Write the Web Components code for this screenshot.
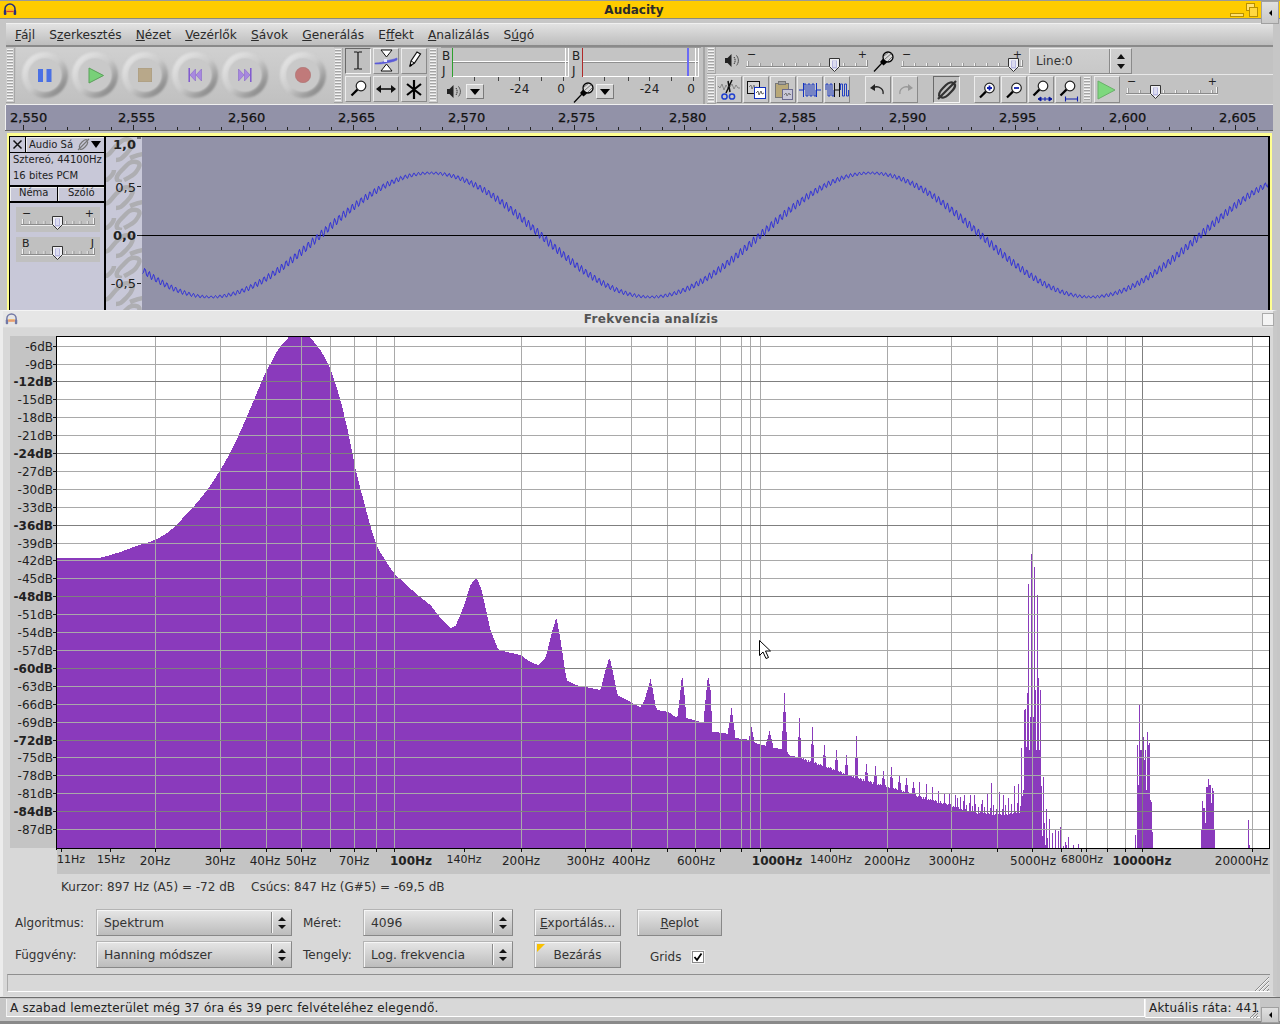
<!DOCTYPE html>
<html><head><meta charset="utf-8"><title>Audacity</title>
<style>
html,body{margin:0;padding:0;background:#c6c6c6;font-family:"DejaVu Sans",sans-serif;font-size:12px;color:#1c1c1c}
body{width:1280px;height:1024px;overflow:hidden;position:relative}
</style></head><body>
<audacity-window>
  <title-bar text="Audacity" slot="title"></title-bar>
  <menu-bar slot="menu">
    <menu-item><u>F</u>ájl</menu-item><menu-item>S<u>z</u>erkesztés</menu-item><menu-item><u>N</u>ézet</menu-item><menu-item><u>V</u>ezérlők</menu-item><menu-item><u>S</u>ávok</menu-item><menu-item><u>G</u>enerálás</menu-item><menu-item>E<u>f</u>fekt</menu-item><menu-item><u>A</u>nalizálás</menu-item><menu-item>S<u>ú</u>gó</menu-item>
  </menu-bar>
  <tool-docks slot="tools"></tool-docks>
  <time-ruler slot="ruler"></time-ruler>
  <audio-track slot="track"></audio-track>
  <status-bar slot="status"></status-bar>
</audacity-window>
<frequency-dialog></frequency-dialog>
<script>
const def=(name,css,html,init)=>customElements.define(name,class extends HTMLElement{
  connectedCallback(){ if(this.shadowRoot)return; const r=this.attachShadow({mode:'open'});
    r.innerHTML='<style>'+css+'</style>'+(typeof html==='function'?html(this):html); if(init)init.call(this,r);} });

const HEAD=(s=14,faded=false)=>`<svg width="${s}" height="${s}" viewBox="0 0 14 14" style="opacity:${faded?.6:1};display:block"><path d="M2 9V6a5 5 0 0 1 10 0v3" fill="none" stroke="#26307a" stroke-width="1.6"/><rect x=".8" y="7" width="2.6" height="5" rx="1" fill="#26307a"/><rect x="10.6" y="7" width="2.6" height="5" rx="1" fill="#26307a"/><rect x="3.4" y="6.5" width="7.2" height="3" fill="#f8a030"/><rect x="3.4" y="8" width="7.2" height="1" fill="#d84020"/></svg>`;

/* ---------- main window ---------- */
def('audacity-window',`:host{display:flex;flex-direction:column;width:1280px;height:1024px;overflow:hidden}
 ::slotted([slot=track]){flex:1;min-height:0}`,
 `<slot name="title"></slot><slot name="menu"></slot><slot name="tools"></slot><slot name="ruler"></slot><slot name="track"></slot><slot name="status"></slot>`);

def('title-bar',`:host{display:block;height:23px;background:#c6c6c6;position:relative}
 .bar{height:17px;background:#ffcc00;border-top:1px solid #9a9a9a;border-bottom:1px solid #8a8a80;display:flex;align-items:center;position:relative}
 .t{position:absolute;left:0;width:1268px;text-align:center;font-weight:700;font-size:12px;color:#2a2a2a;top:2px}
 .ic{margin-left:3px;display:block}
 .btn{margin-left:auto;margin-right:21px;display:flex;align-items:flex-end;height:16px}
 .corner{position:absolute;right:1px;top:1px;width:18px;height:23px;background:linear-gradient(#e0e0e0,#c8c8c8);border:1px solid #a0a0a0;box-sizing:border-box;display:flex;align-items:center;justify-content:center}
 .corner i{width:0;height:0;border:3px solid transparent;border-right-color:#000;margin-left:-3px}`,
 t=>`<div class="bar">${HEAD(14).replace('<svg','<svg class="ic"')}<span class="t">${t.getAttribute('text')}</span>
 <span class="btn"><svg width="30" height="15" viewBox="0 0 30 15"><rect x="1.5" y="10.5" width="13" height="3" fill="#ffe070" stroke="#b89000"/><rect x="17.5" y=".5" width="8" height="7" fill="#ffe070" stroke="#b89000"/><rect x="20.5" y="4.5" width="8" height="9" fill="#ffd840" stroke="#b89000"/></svg></span></div><div class="corner"><i></i></div>`);

def('menu-bar',`:host{display:flex;box-sizing:border-box;height:24px;margin:0 7px 0 6px;padding-left:9px;gap:14.2px;align-items:center;background:linear-gradient(#e2e2e2,#bdbdbd);border-top:1px solid #f0f0f0;border-bottom:2px solid #8a8a8a;font-size:12.2px;color:#2a2a2a}`,`<slot></slot>`);
def('menu-item',`:host{display:block;white-space:nowrap}`,`<slot></slot>`);

def('dock-grip',`:host{display:block;box-sizing:border-box;width:9px;height:100%;padding:1px;background:#cfcfcf;border-right:1px solid #a8a8a8;border-bottom:1px solid #a0a0a0}
 div{height:100%;background:repeating-linear-gradient(#f4f4f4 0 1px,#a4a4a4 1px 2px,#cfcfcf 2px 3px)}`,`<div></div>`);

def('round-button',`:host{display:block;width:46px;height:46px;position:relative}
 .ring{position:absolute;inset:0;border-radius:50%;background:linear-gradient(135deg,#e4e4e4 12%,#cbcbcb 50%,#8c8c8c 84%,#a8a8a8 100%);filter:blur(1.2px)}
 .disc{position:absolute;inset:7px;border-radius:50%;background:#c9c9c9;box-shadow:0 0 2px 1px #c9c9c9}
 .ic{position:absolute;inset:0;display:flex;align-items:center;justify-content:center}`,`<div class="ring"></div><div class="disc"></div><div class="ic"><slot></slot></div>`);

def('transport-bar',`:host{display:flex;align-items:flex-start;box-sizing:border-box;width:318px;height:57px;padding:5px 0 0 6px;gap:4px;background:linear-gradient(#d0d0d0,#c0c0c0)}
 round-button:first-child{margin-right:1px} round-button:last-child{margin-left:8px}`,
 `<round-button><svg width="14" height="13" viewBox="0 0 14 13"><rect x="0" y="0" width="5" height="13" fill="#4a70e4"/><rect x="8.5" y="0" width="5" height="13" fill="#4a70e4"/></svg></round-button>
 <round-button><svg width="17" height="17" viewBox="0 0 17 17" style="margin-left:2px"><path d="M1 1L15.5 8.5 1 16z" fill="#78d078" stroke="#5aa05a"/></svg></round-button>
 <round-button><svg width="14" height="14" viewBox="0 0 14 14"><rect width="14" height="14" fill="#b8a88a" stroke="#a89a80"/></svg></round-button>
 <round-button><svg width="14" height="14" viewBox="0 0 14 14"><path d="M.5 0h1.4v14H.5z" fill="#7a50d0"/><path d="M7.5 1L2 7l5.5 6zM13.5 1L8 7l5.5 6z" fill="#a888e0" stroke="#8868c8" stroke-width=".6"/></svg></round-button>
 <round-button><svg width="14" height="14" viewBox="0 0 14 14"><path d="M12.1 0h1.4v14h-1.4z" fill="#7a50d0"/><path d="M.5 1L6 7l-5.500 6zM6.500 1L12 7l-5.500 6z" fill="#a888e0" stroke="#8868c8" stroke-width=".6"/></svg></round-button>
 <round-button><svg width="16" height="16" viewBox="0 0 16 16"><circle cx="8" cy="8" r="7.700" fill="#c07a7a" stroke="#a86a6a" stroke-width=".5"/></svg></round-button>`);

def('tool-btn',`:host{display:flex;align-items:center;justify-content:center;box-sizing:border-box;width:26px;height:26px;background:#c8c8c8;border:1px solid;border-color:#ececec #8a8a8a #8a8a8a #ececec}
 :host([pressed]){border-color:#6a6a6a #f4f4f4 #f4f4f4 #6a6a6a;background:#c0c0c0}`,`<slot></slot>`);

const MAG=(extra='',cx=14,cy=10)=>`<circle cx="${cx}" cy="${cy}" r="4.800" fill="#fff" stroke="#222" stroke-width="1.200"/><path d="M${cx-3.6} ${cy+3.6}L${cx-9.500} ${cy+9.500}" stroke="#000" stroke-width="2.200"/>${extra}`;
const ICON=(body,s=24)=>`<svg width="${s}" height="${s}" viewBox="0 0 24 24" style="display:block">${body}</svg>`;

def('tools-grid',`:host{display:grid;grid-template-columns:repeat(3,26px);grid-template-rows:26px 26px;gap:2px;margin:1px 2px 0}`,
 `<tool-btn pressed>${ICON('<path d="M8 3h3.500M12.500 3H16M12 3v17M8 20h3.500M12.500 20H16" stroke="#111" stroke-width="1.200" fill="none"/>')}</tool-btn>
 <tool-btn>${ICON('<path d="M7 1h11l-5.500 7zM7 22h11l-5.500-7z" fill="#fff" stroke="#111"/><path d="M1 14c5 0 8-1 11-2s8-1.500 11-3v2c-4 2-7 2-11 3s-7 1-11 1z" fill="#5a5ad8" stroke="#5a5ad8" stroke-width=".6"/><rect x="10" y="10" width="3" height="3" fill="#e8e8ff"/>')}</tool-btn>
 <tool-btn>${ICON('<path d="M8 17l1-5 6-9 3.500 2-6 9-4.500 3z" fill="#fff" stroke="#111" stroke-width="1.200"/><path d="M9 12l3.500 2" stroke="#111"/><path d="M8 17l1.500-1.500" stroke="#000" stroke-width="2"/>')}</tool-btn>
 <tool-btn>${ICON(MAG('',15,9))}</tool-btn>
 <tool-btn>${ICON('<path d="M3 12h18" stroke="#111" stroke-width="1.600"/><path d="M2 12l5-4v8zM22 12l-5-4v8z" fill="#111"/>')}</tool-btn>
 <tool-btn>${ICON('<path d="M12 3v19M5 7l14 11M19 7L5 18" stroke="#000" stroke-width="2.200"/>')}</tool-btn>`);

def('drop-btn',`:host{display:flex;align-items:center;justify-content:center;box-sizing:border-box;width:18px;height:15px;background:#d0d0d0;border:1px solid;border-color:#f0f0f0 #7a7a7a #7a7a7a #f0f0f0}
 i{width:0;height:0;border:5.500px solid transparent;border-top:6px solid #000;border-bottom:0}`,`<i></i>`);

def('level-meter',`:host{display:flex;flex-direction:column;width:130px;height:57px;position:relative}
 svg{display:block;flex:none}
 .row{display:flex;align-items:center;height:21px;font-size:12px;color:#222}
 .ic{width:25px;height:21px;display:flex;align-items:center;justify-content:center}
 .a,.b{align-self:flex-start;line-height:17px}
 .a{width:71px;text-align:center}.b{width:12px;text-align:center}`,
 t=>{const c=t.getAttribute('color'),mark=t.getAttribute('mark');
 return `<svg width="130" height="34" viewBox="0 0 130 34" font-family="DejaVu Sans" font-size="12" fill="#222">
 <rect x="0" y="0" width="130" height="1" fill="#9a9a9a"/>
 <text x="1" y="13">B</text><text x="1" y="28">J</text>
 <rect x="11" y="1" width="117" height="29" fill="#c4c4c4"/>
 <rect x="11" y="14" width="117" height="1" fill="#fff"/><rect x="11" y="15" width="117" height="1" fill="#8f8f8f"/><rect x="11" y="29" width="117" height="1" fill="#fff"/>
 <rect x="11" y="1" width="1" height="29" fill="${c}"/>
 <rect x="124" y="1" width="1" height="29" fill="#fff"/><rect x="127" y="1" width="1" height="29" fill="#fff"/>
 ${mark?`<rect x="${mark}" y="1" width="2" height="28" fill="#6a6af4"/>`:''}
 ${[33,57,78,100,122].map(x=>`<rect x="${x}" y="30" width="1" height="4" fill="#444"/>`).join('')}</svg>
 <div class="row"><span class="ic"><slot></slot></span><drop-btn></drop-btn><span class="a">-24</span><span class="b">0</span></div>`});

const SPK=`<svg width="16" height="15" viewBox="0 0 16 15" style="display:block"><path d="M1 5h2.500L7.500 1v13l-4-4H1z" fill="#222"/><path d="M10 4c1.500 2 1.500 5 0 7M12.500 2.500c2.500 3 2.500 7 0 10" fill="none" stroke="#333" stroke-dasharray="1.500 .6"/></svg>`;
const MIC=`<svg width="22" height="22" viewBox="0 0 22 22" style="display:block"><path d="M1 21.500L9 13" stroke="#000" stroke-width="1.200"/><path d="M7 12l3.500 3.500 3.500-3-4-4z" fill="#000"/><ellipse cx="15" cy="7" rx="5" ry="5" fill="#d8d8d8" stroke="#000" stroke-width="1.300"/><path d="M11 6l5-4M12 9l7-6M14.500 11.500l5-5" stroke="#333" stroke-width=".6"/></svg>`;

def('mini-slider',`:host{display:block}svg{display:block}`,t=>{
 const w=+t.getAttribute('w'),pos=+t.getAttribute('pos'),step=+t.getAttribute('step'),l=t.getAttribute('l'),r=t.getAttribute('r'),
 bg=t.getAttribute('bg')||'none',h=+(t.getAttribute('h')||26),ly=+(t.getAttribute('ly')||18),x0=+(t.getAttribute('x0')||0),ty=+(t.getAttribute('ty')||ly-8);
 const xe=w-x0;
 let ticks='';for(let x=x0+1,i=0;x<xe-3;x+=step,i++){const end=i==0;ticks+=`<rect x="${x}" y="${ly-(end?5:3)}" width="1" height="${end?5:3}" fill="#f4f4f4"/><rect x="${x+1}" y="${ly-(end?5:3)}" width="1" height="${end?5:3}" fill="#9a9a9a"/>`;}
 ticks+=`<rect x="${xe-2}" y="${ly-6}" width="1" height="6" fill="#f4f4f4"/><rect x="${xe-1}" y="${ly-6}" width="1" height="6" fill="#8a8a8a"/>`;
 return `<svg width="${w}" height="${h}" viewBox="0 0 ${w} ${h}" font-family="DejaVu Sans" font-size="11" fill="#222">
 <rect width="${w}" height="${h}" fill="${bg}"/>
 <text x="${x0+1}" y="${ty}">${l}</text><text x="${xe-1}" y="${ty}" text-anchor="end">${r}</text>
 ${ticks}<rect x="${x0}" y="${ly}" width="${xe-x0}" height="1" fill="#8a8a8a"/><rect x="${x0}" y="${ly+1}" width="${xe-x0}" height="1" fill="#ececec"/>
 <path d="M${pos-4.500} ${ly-7.500}h10v8l-5 5-5-5z" fill="#f0f0f4" stroke="#333"/>
 <rect x="${pos-2}" y="${ly-5.500}" width="5" height="8" fill="#b8b8e0"/><path d="M${pos-1} ${ly-4}h3M${pos-1} ${ly-2}h3M${pos-1} ${ly}h3" stroke="#fff"/></svg>`});

def('line-combo',`:host{display:flex;box-sizing:border-box;width:103px;height:26px;align-items:center;background:linear-gradient(#cfcfcf,#c8c8c8);border:1px solid;border-color:#ececec #8a8a8a #8a8a8a #ececec;font-size:12px;color:#333}
 span{flex:1;padding-left:6px} b{display:block;width:20px;height:24px;border-left:1px solid #ececec;box-shadow:-1px 0 #8a8a8a;display:flex;flex-direction:column;align-items:center;justify-content:center;gap:5px}
 i{width:0;height:0;border:4px solid transparent} i.u{border-bottom:5px solid #111;border-top:0} i.d{border-top:5px solid #111;border-bottom:0}`,
 `<span>Line:0</span><b><i class="u"></i><i class="d"></i></b>`);

def('mixer-row',`:host{display:flex;height:28px;box-sizing:border-box;align-items:center;border-bottom:1px solid #e8e8e8}
 .sp{margin-left:8px;width:22px}.mc{margin:0 6px 0 5px;width:22px}
 mini-slider{align-self:flex-start;margin-top:1px}
 line-combo{margin:1px 0 0 6px}`,
 `<dock-grip></dock-grip><span class="sp">${SPK}</span><mini-slider w="122" pos="88" step="12" l="−" r="+"></mini-slider><span class="mc">${MIC}</span><mini-slider w="122" pos="112" step="12" l="−" r="+"></mini-slider><line-combo></line-combo>`);

const SQW=(x,n,s=2)=>{let d=`M${x} 12`;let cx=x;for(let i=0;i<n;i++){d+=`V${i%2?18:6}`;cx+=s;d+=`H${cx}`}return d+'V12'};
def('edit-row',`:host{display:flex;height:29px;align-items:flex-start;padding-top:1px;box-sizing:border-box}
 tool-btn{margin-right:1px;height:27px}
 .g1{margin-left:14px}.g2{margin-left:14px}.g3{margin-left:13px}
 mini-slider{margin-left:5px;margin-top:-1px}
 .gr{margin:0 2px 0 1px;width:9px;height:27px}`,
 `<dock-grip></dock-grip>
 <tool-btn>${ICON('<path d="M1 8l2 2 2-4 2 6 2-5 2 3M13 9l2-3 2 5 2-4 2 3h2" fill="none" stroke="#777" stroke-width=".8"/><path d="M15 2L9 15M11 3l2 11" stroke="#111" stroke-width="1.500"/><circle cx="7.500" cy="18.500" r="2.600" fill="none" stroke="#2040d0" stroke-width="1.500"/><circle cx="15" cy="18.500" r="2.600" fill="none" stroke="#2040d0" stroke-width="1.500"/>')}</tool-btn>
 <tool-btn>${ICON('<rect x="3.500" y="3.500" width="12" height="12" fill="#d4d4d4" stroke="#111"/><path d="M5 9l2-2 1 4 2-4 1 3 2-1" fill="none" stroke="#666" stroke-width=".8"/><rect x="10.500" y="9.500" width="11" height="11" fill="#fff" stroke="#1030c0"/><path d="M12 15l2-2 1 4 2-4 1 3 2-1" fill="none" stroke="#444" stroke-width=".8"/>')}</tool-btn>
 <tool-btn>${ICON('<rect x="4.500" y="5.500" width="13" height="14" fill="#b8a878" stroke="#777"/><rect x="7.500" y="3.500" width="7" height="3" fill="#a0a0a0" stroke="#777"/><rect x="11.500" y="11.500" width="10" height="10" fill="#c8c8d8" stroke="#6a6a90"/><path d="M13 17l2-2 1 3 2-3 1 2 1-1" fill="none" stroke="#666" stroke-width=".8"/>')}</tool-btn>
 <tool-btn>${ICON('<path d="M1 12h5M18 12h5" stroke="#1030c0"/><path d="'+SQW(6,6)+'" fill="none" stroke="#1030c0" stroke-width=".9"/><path d="M5.500 5v14M18.500 5v14" stroke="#1030c0"/>')}</tool-btn>
 <tool-btn>${ICON('<path d="'+SQW(1,4)+'" fill="none" stroke="#1030c0" stroke-width=".9"/><path d="'+SQW(15.500,4)+'" fill="none" stroke="#1030c0" stroke-width=".9"/><path d="M9.500 5v14M14.500 5v14M9 12h6" stroke="#111"/>')}</tool-btn>
 <tool-btn class="g1">${ICON('<path d="M17 16c1-5-4-8-8-7L6 10" fill="none" stroke="#222" stroke-width="1.300"/><path d="M4 10l5-4v7z" fill="#222"/>')}</tool-btn>
 <tool-btn>${ICON('<path d="M7 16c-1-5 4-8 8-7l3 1" fill="none" stroke="#999" stroke-width="1.300"/><path d="M20 10l-5-4v7z" fill="#999"/>')}</tool-btn>
 <tool-btn class="g2" pressed style="width:27px">${ICON('<path d="M5 19c-3-3 1-7 3-9l3-3c3-3 6-3 7-2M19 5c3 3-1 7-3 9l-3 3c-3 3-6 3-7 2M3 21L21 3" fill="none" stroke="#333" stroke-width="2.200"/>')}</tool-btn>
 <tool-btn class="g3">${ICON(MAG('<path d="M12 10h5M14.500 7.500v5" stroke="#1020b0" stroke-width="1.800"/>',14.500,10))}</tool-btn>
 <tool-btn>${ICON(MAG('<path d="M12 10h5" stroke="#1020b0" stroke-width="1.800"/>',14.500,10))}</tool-btn>
 <tool-btn>${ICON(MAG('<path d="M9 21h14M9 21l3-2v4zM23 21l-3-2v4zM16 19v4" stroke="#1020b0"/>',14,8))}</tool-btn>
 <tool-btn>${ICON(MAG('<path d="M9 21h13M9.500 18.500v5M21.500 18.500v5" stroke="#1020b0" stroke-width="1.100"/>',14,8))}</tool-btn>
 <dock-grip class="gr"></dock-grip>
 <tool-btn>${ICON('<path d="M3 3l17 9-17 9z" fill="#7ed87e" stroke="#6ab06a"/>')}</tool-btn>
 <mini-slider w="92" pos="29" step="12" l="−" r="+" h="28"></mini-slider>`);

def('tool-docks',`:host{display:flex;height:57px;margin:0 7px 0 6px;background:#c2c2c2;border-bottom:1px solid #f0f0f0;font-size:12px}
 .g{height:55px;margin-top:1px}
 transport-bar{margin-left:1px}
 .meters{display:flex;width:267px;padding-left:3px;box-sizing:border-box;border-right:2px solid #a4a4a4}
 .right{display:flex;flex-direction:column;width:566px;margin-left:2px}`,
 `<dock-grip class="g"></dock-grip><transport-bar></transport-bar><dock-grip class="g"></dock-grip><tools-grid></tools-grid><dock-grip class="g"></dock-grip>
 <div class="meters"><level-meter color="#2ea02e">${SPK}</level-meter><level-meter color="#b02a2a" mark="116">${MIC}</level-meter></div>
 <div class="right"><mixer-row></mixer-row><edit-row></edit-row></div>`);

def('time-ruler',`:host{display:block;height:25px;margin:0 7px 0 5px;background:#9292a8;border-left:1px solid #f0f0f0}svg{display:block}`,()=>{
 let s='';const labs=['2,550','2,555','2,560','2,565','2,570','2,575','2,580','2,585','2,590','2,595','2,600','2,605'];
 labs.forEach((l,i)=>{const ax=i==0?10:Math.round(118+110.1*(i-1));s+=`<text x="${ax-6}" y="17">${l}</text>`});
 for(let j=-5;j<55;j++){const ax=Math.round(133+22.04*j);const mj=((j%5)+5)%5==0;s+=`<rect x="${ax-6}" y="${mj?20:22}" width="1" height="${mj?5:3}" fill="#222" stroke="none"/>`}
 return `<svg width="1268" height="25" font-family="DejaVu Sans" font-size="13" fill="#111" stroke="#111" stroke-width=".25">${s}</svg>`});

/* ---------- track ---------- */
def('audio-track',`:host{display:flex;box-sizing:border-box;margin:0 7px 0 5px;padding:2px 1px 0 2px;background:#c6c6c6;position:relative;border-top:1px solid #666;min-width:0}
 .sel{display:flex;flex:1;min-width:0;border-top:3px solid #ffff90;border-left:2px solid #ffff90;border-right:2px solid #ffff90;padding:1px 2px 0 0;background:#000}
 .panel{box-sizing:border-box;width:96px;margin-left:1px;background:#c8c8d8;display:flex;flex-direction:column;font-size:10px;color:#222;border-right:2px solid #000;flex:none}
 .r1{display:flex;height:15px;border-bottom:1px solid #000;gap:1px;background:#000}
 .x{width:15px;background:#c8c8d8;display:flex;align-items:center;justify-content:center}
 .nm{flex:1;display:flex;align-items:center;background:#c8c8d8;padding:0 0 1px 2px;border-top:1px solid #eee;border-left:1px solid #eee;white-space:nowrap}
 .nm svg{margin-left:4px}
 .nm i{width:0;height:0;border:5.500px solid transparent;border-top:7px solid #000;border-bottom:0;margin-left:1px}
 .info{height:33px;margin-top:-1px;padding:0 0 0 3px;line-height:15.500px;border-bottom:2px solid #000;white-space:nowrap}
 .r3{display:flex;height:14px;border-bottom:2px solid #000;gap:1px;background:#000}
 .r3 span{flex:1;background:#c8c8d8;text-align:center;line-height:10px;border-top:1px solid #eee;border-left:1px solid #eee}
 .sl{display:flex;flex-direction:column;gap:5px;padding:4px 0 0 6px}
 .vr{width:36px;flex:none;position:relative;background:#c8c8d8}
 .vr svg{display:block;position:absolute;inset:0}
 .wave{flex:1;min-width:0;background:#9292a8;position:relative;overflow:hidden}
 .wave svg{display:block}`,()=>{
  let d='';for(let x=142;x<=1270;x+=1){const ph=2*Math.PI*(x-210)/440;const a=Math.abs(Math.sin(ph));const r=(1.1+3.2*a)*Math.sin(2*Math.PI*x/4.41);
   d+=(d?'L':'M')+(x-142+.5).toFixed(2)+' '+(235+62*Math.cos(ph)+r-137).toFixed(2)}
  return `<div class="sel"><div class="panel"><div class="r1"><span class="x"><svg width="11" height="11" viewBox="0 0 11 11"><path d="M1.500 1.500l8 8M9.500 1.500l-8 8" stroke="#111" stroke-width="1.500"/></svg></span>
   <span class="nm">Audio Sá<svg width="13" height="13" viewBox="0 0 13 13"><path d="M3 10c-2-2 0-4 2-6s4-3 5-2M10 3c2 2 0 4-2 6s-4 3-5 2M1 12L12 1" fill="none" stroke="#777" stroke-width="1.200"/></svg><i></i></span></div>
   <div class="info">Sztereó, 44100Hz<br>16 bites PCM</div>
   <div class="r3"><span>Néma</span><span>Szóló</span></div>
   <div class="sl"><mini-slider w="84" pos="41" step="7.200" x0="5" l="−" r="+" h="25" ly="17" ty="10" bg="#c0c0c0"></mini-slider><mini-slider w="84" pos="41" step="7.200" x0="5" l="B" r="J" h="25" ly="17" ty="10" bg="#c0c0c0"></mini-slider></div>
  </div>
  <div class="vr"><svg width="36" height="180" viewBox="0 0 36 180" font-family="DejaVu Sans" font-size="13" fill="#222">
   <defs><pattern id="ch" width="36" height="48" patternUnits="userSpaceOnUse" y="-3"><path d="M-4 22C4 22 4 18 10 12s9-8 14-6 2 8-3 13-6 7-11 7M16 48c-8-1-6-6 0-12s8-9 14-8 3 6 0 10-8 6-12 8M24 24c5-2 9-4 14-4M-2 48C4 44 8 40 8 36" fill="none" stroke="#aeaeb2" stroke-width="4.500"/></pattern></defs>
   <rect width="36" height="180" fill="url(#ch)"/>
   <text x="30" y="12" text-anchor="end" font-weight="700" font-size="13">1,0</text>
   <text x="30" y="54.500" text-anchor="end">0,5</text><text x="30" y="103" text-anchor="end" font-weight="700">0,0</text><text x="30" y="151" text-anchor="end">-0,5</text>
   <path d="M31 49.500h4M31 98.500h5M31 146.500h4M31 1h4" stroke="#222"/></svg></div>
  <div class="wave"><svg width="1130" height="180" viewBox="0 0 1130 180"><path d="M0 98.500H1130" stroke="#000"/><path d="${d}" fill="none" stroke="#2f2fd8" stroke-width="1"/></svg></div></div>`});

def('status-bar',`:host{display:flex;box-sizing:border-box;height:27px;padding:1px 20px 4px 6px;border-top:1px solid #6e6e6e;background:#c6c6c6;font-size:12px;color:#222;position:relative;border-bottom:3px solid #8a8a8a}
 div{display:flex;flex:1;background:#d8d8d8;border-left:1px solid #f0f0f0;border-bottom:1px solid #fff;align-items:center;white-space:nowrap;height:18px}
 .a{flex:none;width:1139px;padding-left:3px;box-sizing:border-box;letter-spacing:.21px;border-right:1px solid #fff}
 .b{padding-left:3px;overflow:hidden;letter-spacing:.2px}
 .g{position:absolute;right:22px;bottom:3px;display:block}
 .corner{position:absolute;right:1px;bottom:-2px;width:18px;height:16px;background:linear-gradient(#e0e0e0,#c8c8c8);border:1px solid #a0a0a0;box-sizing:border-box;display:flex;align-items:center;justify-content:center}
 .corner i{width:0;height:0;border:3px solid transparent;border-right-color:#000;margin-left:-3px}`,
 `<div class="a">A szabad lemezterület még 37 óra és 39 perc felvételéhez elegendő.</div><div class="b">Aktuális ráta: 441</div>
 <svg class="g" width="9" height="9" viewBox="0 0 9 9"><path d="M1 9l8-8M4 9l5-5M7 9l2-2" stroke="#8a8a8a"/></svg><span class="corner"><i></i></span>`);

/* ---------- dialog ---------- */
def('combo-box',`:host{display:flex;box-sizing:border-box;height:27px;align-items:center;background:linear-gradient(#e6e6e6,#bcbcbc);border:1px solid;border-color:#b4b4b4 #888 #888 #b4b4b4;box-shadow:inset 1px 1px #f6f6f6;font-size:12.300px;color:#333}
 span{flex:1;padding-left:7px;white-space:nowrap}
 b{display:flex;flex-direction:column;align-items:center;justify-content:center;gap:4px;width:18px;height:21px;border-left:1px solid #f8f8f8;box-shadow:-1px 0 #8a8a8a}
 i{width:0;height:0;border:4px solid transparent} i.u{border-bottom:4px solid #111;border-top:0} i.d{border-top:4px solid #111;border-bottom:0}`,
 `<span><slot></slot></span><b><i class="u"></i><i class="d"></i></b>`);

def('push-button',`:host{display:flex;box-sizing:border-box;height:27px;align-items:center;justify-content:center;background:linear-gradient(#e6e6e6,#bcbcbc);border:1px solid;border-color:#b4b4b4 #888 #888 #b4b4b4;box-shadow:inset 1px 1px #f6f6f6;font-size:12px;color:#333;position:relative;white-space:nowrap}
 :host([corner])::before{content:"";position:absolute;left:2px;top:2px;width:0;height:0;border-top:8px solid #f8c000;border-right:8px solid transparent}`,`<slot></slot>`);

def('spectrum-plot',`:host{display:block;height:538px;margin-left:10px}svg{display:block}`,()=>{
 const X=f=>Math.round(411+(Math.log10(f)-2)*365.6);
 const px=[346,364,381,399,417,435,453,471,489,507,525,543,560,578,596,614,632,650,668,686,704,722,740,757,775,793,811,829];
 const OX=10,OY=336;
 const env=[[57,558],[100,558],[120,552],[133,547],[155,540],[170,531],[193,507],[207,490],[220,470],[233,447],[248,413],[263,377],[277,350],[290,335],[308,335],[320,350],[330,368],[340,400],[348,433],[355,470],[363,500],[370,527],[377,548],[393,573],[417,595],[430,605],[440,618],[450,628],[455,626],[463,607],[470,585],[476,577],[481,590],[490,630],[498,650],[520,655],[530,662],[538,665],[545,658],[552,630],[556,617],[560,640],[566,680],[575,685],[590,688],[600,690],[605,670],[609,657],[612,670],[617,695],[630,702],[640,707],[644,700],[647,690],[650,679],[652,688],[655,706],[657,710],[668,712],[675,717],[677,716],[679,700],[681,680],[682,678],[684,695],[686,718],[700,722],[703,722],[705,700],[707,680],[708,678],[710,690],[712,732],[725,733],[735,738],[750,740],[755,743],[770,747],[785,750],[790,756],[800,757],[805,760],[815,763],[830,768],[845,774],[860,779],[880,785],[900,790],[920,797],[950,805],[970,812],[1000,815],[1020,812]];
 const spikes=[[731,708,3],[751,727,2],[769,731,3],[784,693,2],[799,718,1],[812,727,1],[824,745,1],[836,750,1],[846,755,1],[856,736,1],[866,764,1],[875,766,1],[883,771,1],[891,767,1],[899,775,1],[906,778,1],[913,782,1],[919,782,0],[926,784,0],[932,787,0],[938,791,0],[944,793,0],[949,793,0],[955,795,0],[960,797,0],[964,795,0],[970,795,0],[974,795,0],[982,800,0],[987,794,0],[991,783,0],[999,792,0],[1003,795,0],[1008,798,0],[1014,786,0],[1018,784,0]];
 const bars={1021:748,1022:796,1023:790,1024:710,1025:709,1026:747,1027:693,1028:584,1029:750,1030:717,1031:554,1032:717,1033:717,1034:567,1035:690,1036:750,1037:595,1038:678,1039:750,1040:690,1041:786,1042:836,1043:777,1044:823,1045:845,1046:809,1047:838,1049:819,1052:833,1055:830,1058:831,1060:827,1061:845,1063:846,1065:842,1066:845,1068:837,1073:845,1078:844,
  1135:835,1137:745,1138:785,1139:705,1140:750,1141:750,1142:800,1143:737,1144:760,1145:750,1146:790,1147:732,1148:745,1149:743,1150:800,1151:802,1152:832,
  1201:830,1202:801,1203:808,1204:808,1205:823,1206:787,1207:787,1208:779,1209:785,1210:785,1211:803,1212:788,1213:791,1214:830,1248:820,1249:845,1252:830};
 const base=x=>{for(let i=1;i<env.length;i++){if(x<=env[i][0]){const [a,b]=env[i-1],[c,e]=env[i];return b+(e-b)*(x-a)/(c-a)}}return 812};
 const smooth=x=>{const W=x<260?9:x<430?4:x<625?1:0;if(!W)return base(x);let s=0,n=0;for(let k=-W;k<=W;k++){const v=Math.max(57,x+k);const w=W+1-Math.abs(k);s+=base(v)*w;n+=w}return s/n};
 let d='';
 for(let x=57;x<=1268;x++){let y;
  if(x<=1020){y=smooth(x);
   if(x>800) y+=((x*37)%5)*.5-1;
   if(x>=957&&x%3==0) y=Math.min(y,smooth(x)-6-((x*7)%6));
   for(const [sx,sy,hw] of spikes){const dx=Math.abs(x-sx);if(dx<=hw){y=Math.min(y,sy+(base(x)-sy)*dx/(hw+1))}}
  } else { y=bars[x]; if(y==null) continue; }
  y=Math.round(Math.max(y,337));
  d+=`M${x-OX+.5} ${y-OY}V${848-OY}`;
 }
 let grid='';
 const vf=[];for(const m of [10,100,1000])for(let k=2;k<=9;k++)vf.push(k*m);vf.push(10000,20000);
 for(const f of vf){const mj=f==100||f==1000||f==10000;
   grid+=`<rect x="${X(f)-OX}" y="1" width="1" height="511" fill="${mj?'#7f7f7f':'#a9a9a9'}"/>`;}
 grid+=`<rect x="${750-OX}" y="1" width="1" height="511" fill="#a9a9a9"/>`;
 const ml=[];px.forEach((y,i)=>{const db=6+3*i,mj=db%12==0;
   grid+=`<rect x="47" y="${y-OY}" width="1213" height="1" fill="${mj?'#7f7f7f':'#a9a9a9'}"/>`;
   ml.push(`<rect x="43" y="${y-OY}" width="4" height="1" fill="#111"/><text x="43" y="${y-OY+5}" text-anchor="end" ${mj?'font-weight="700"':''}>-${db}dB</text>`)});
 const ticks=[11,15,...vf,140,1400,6800].map(f=>`<rect x="${X(f)-OX}" y="513" width="1" height="3" fill="#111"/>`).join('');
 const lab=[['11Hz',71,1],['15Hz',111,1],['20Hz',155],['30Hz',220],['40Hz',265],['50Hz',301],['70Hz',354],['100Hz',411,2],['140Hz',464,1],['200Hz',521],['300Hz',585.500],['400Hz',631],['600Hz',696],['1000Hz',777,2],['1400Hz',831,1],['2000Hz',887],['3000Hz',951.500],['5000Hz',1033],['6800Hz',1082,1],['10000Hz',1142,2],['20000Hz',1241.500]]
  .map(([t,x,k])=>`<text x="${x-OX}" y="${k==1?527:529}" text-anchor="middle" font-size="${k==1?11:12}" ${k==2?'font-weight="700"':''}>${t}</text>`).join('');
 return `<svg width="1260" height="538" viewBox="0 0 1260 538" font-family="DejaVu Sans" font-size="12" fill="#222">
  <rect x="0" y="0" width="47" height="512" fill="#c4c4c4"/><rect x="47" y="513" width="1213" height="25" fill="#c4c4c4"/>
  <rect x="47" y="1" width="1213" height="511" fill="#fff"/>
  <path d="${d}" stroke="#8a3abc" stroke-width="1" fill="none" shape-rendering="crispEdges"/>
  ${grid}
  <rect x="46" y="0" width="1214" height="1" fill="#000"/><rect x="46" y="0" width="1" height="514" fill="#000"/><rect x="1259" y="0" width="1" height="513" fill="#000"/><rect x="46" y="512" width="1214" height="1" fill="#000"/>
  ${ml.join('')}${ticks}${lab}</svg>`});

def('frequency-dialog',`:host{position:absolute;left:0;top:310px;width:1277px;height:687px;box-sizing:border-box;background:#d8d8d8;border-left:3px solid #ececec;border-right:4px solid #c8c8c8;border-top:1px solid #f4f4f4;border-bottom:1px solid #e0e0e0;display:flex;flex-direction:column;font-size:12px;color:#333}
 .tb{display:flex;align-items:center;height:16px;background:#e6e6e6;flex:none;position:relative;border-bottom:1px solid #dcdcdc}
 .tb .ic{margin-left:2px}
 .tb .t{position:absolute;left:26px;right:0;text-align:center;font-weight:700;font-size:12px;color:#555;top:1px;letter-spacing:.3px}
 .tb .sq{margin-left:auto;margin-right:-1px;width:10px;height:11px;background:#f4f4f4;border:1px solid #aaa}
 .pwrap{margin:8px 0 0 -3px}
 .read{display:flex;height:17px;margin:4px 0 0 58px;gap:16px;align-items:center;white-space:nowrap;font-size:12px}
 .ctl{display:grid;grid-template-columns:81px 196px 11px 60px 150px 21px 87px 16px 85px;grid-template-rows:27px 27px;row-gap:5px;margin:14px 0 0 12px;align-items:center;white-space:nowrap}
 .grids{display:flex;align-items:center;gap:11px;padding:4px 0 0 13px;width:100px}
 .cb{width:10px;height:10px;border:1px solid #888;background:#fff;box-shadow:0 0 0 1px #f0f0f0;display:flex}
 .panel{flex:none;height:16px;margin:6px 3px 0 4px;border-top:1px solid #8f8f8f;border-left:1px solid #aaa;border-bottom:1px solid #fff;position:relative}
 .panel svg{position:absolute;right:1px;bottom:0}
 .cur{position:absolute;left:756px;top:329px}`,
 `<div class="tb"><span class="ic">${HEAD(13,true)}</span><span class="t">Frekvencia analízis</span><span class="sq"></span></div>
 <div class="pwrap"><spectrum-plot></spectrum-plot></div>
 <div class="read"><span>Kurzor: 897 Hz (A5) = -72 dB</span><span>Csúcs: 847 Hz (G#5) = -69,5 dB</span></div>
 <div class="ctl">
  <span>Algoritmus:</span><combo-box>Spektrum</combo-box><i></i><span>Méret:</span><combo-box>4096</combo-box><i></i><push-button><span><u>E</u>xportálás...</span></push-button><i></i><push-button><span><u>R</u>eplot</span></push-button>
  <span>Függvény:</span><combo-box>Hanning módszer</combo-box><i></i><span>Tengely:</span><combo-box>Log. frekvencia</combo-box><i></i><push-button corner>Bezárás</push-button><i></i><span class="grids">Grids <span class="cb"><svg width="10" height="10" viewBox="0 0 10 10"><path d="M1.500 5l2.500 3 4.500-6.500" fill="none" stroke="#000" stroke-width="1.800"/></svg></span></span>
 </div>
 <div class="panel"><svg width="15" height="15" viewBox="0 0 15 15"><path d="M1 15L15 1M5 15L15 5M9 15l6-6M13 15l2-2" stroke="#8a8a8a"/><path d="M2 15L15 2M6 15l9-9M10 15l5-5" stroke="#f6f6f6"/></svg></div>
 <svg class="cur" width="14" height="22" viewBox="0 0 14 22"><path d="M.5.5v15l3.500-3.500 3 6.500 2.500-1-3-6.500h5z" fill="#fff" stroke="#000"/></svg>`);
</script>
</body></html>
